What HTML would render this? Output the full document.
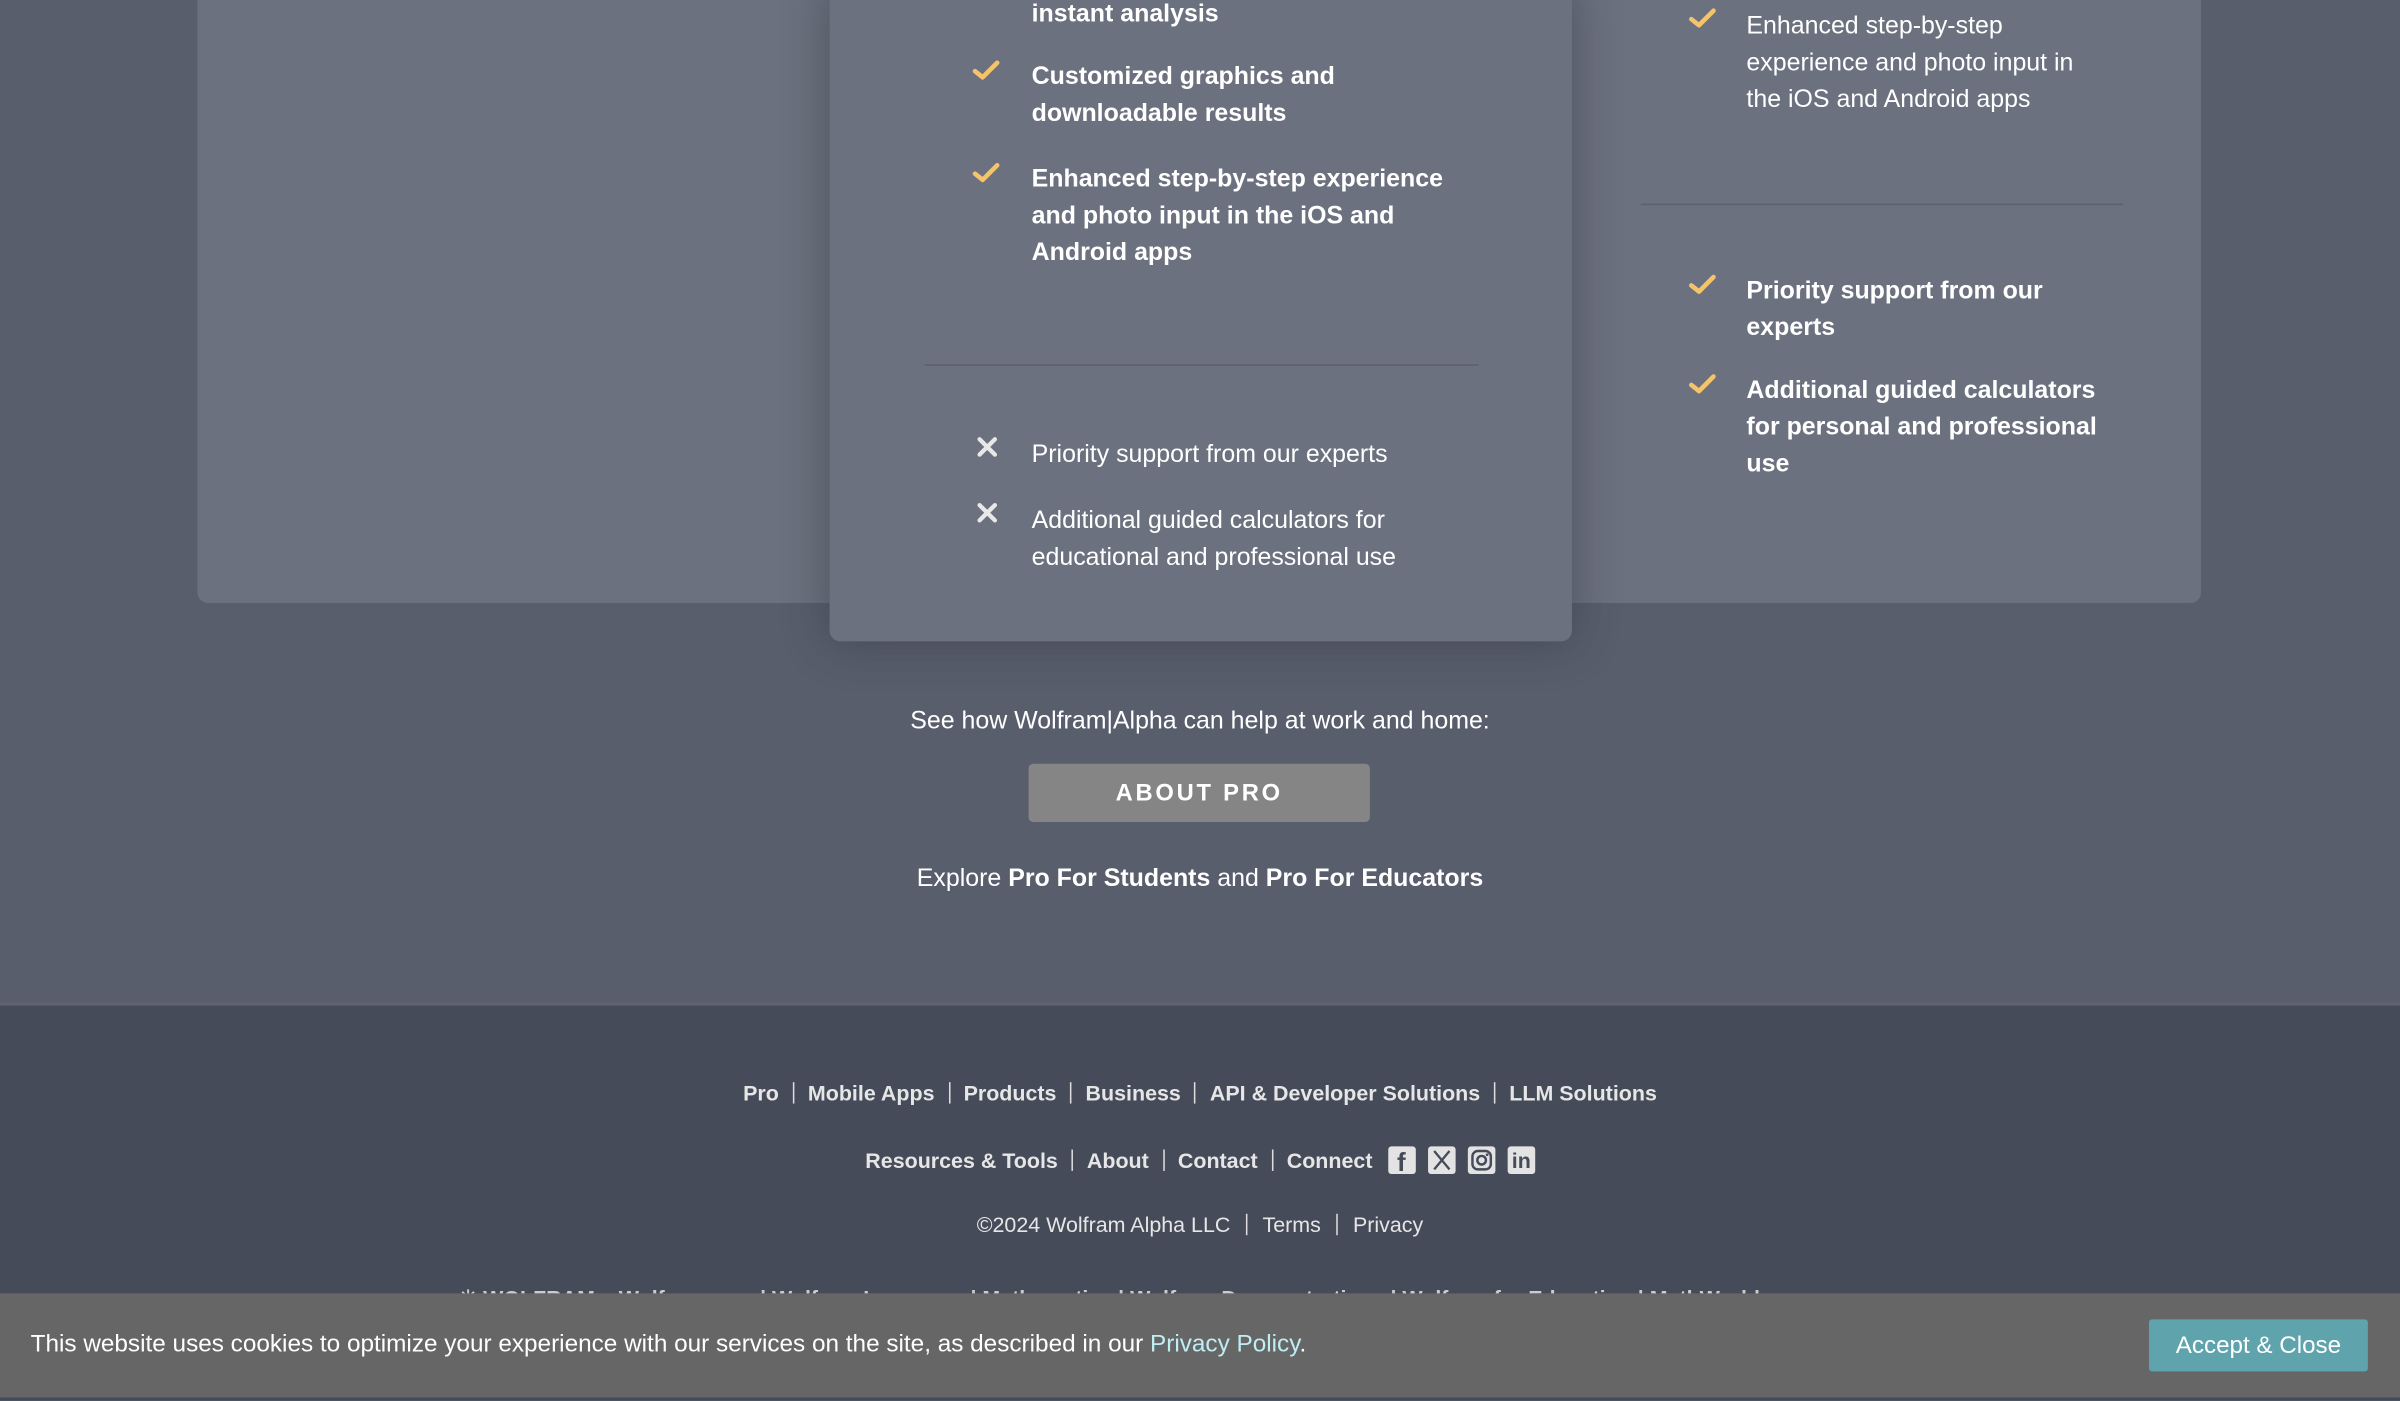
<!DOCTYPE html>
<html><head><meta charset="utf-8"><style>
html,body{margin:0;padding:0;width:2400px;height:1398px;overflow:hidden;background:#585e6c;}
#s{position:absolute;left:0;top:0;width:1568px;height:913px;transform:scale(1.530612);transform-origin:0 0;font-family:"Liberation Sans",sans-serif;color:#fff;}
.a{position:absolute;}
.wide{left:129px;top:-10px;width:1309px;height:404px;background:#6b717e;border-radius:0 0 7px 7px;}
.mid{left:542px;top:-10px;width:485px;height:429px;background:#6b717e;border-radius:0 0 7px 7px;box-shadow:0 0 30px rgba(40,44,56,.45);}
.t{position:absolute;font-size:16.3px;line-height:24px;}
.b{font-weight:bold;}
.ck{position:absolute;width:18px;height:14px;}
.hr{position:absolute;height:1px;background:#5b606d;}
.c{position:absolute;left:0;width:1568px;text-align:center;}
.fl{font-size:14px;font-weight:bold;color:#e6e6e6;}
.fl span.s{display:inline-block;width:1px;height:14px;background:#ddd;margin:0 9px;vertical-align:-2px;}
.ic{display:inline-block;width:18px;height:18px;background:#e3e3e3;border-radius:2px;vertical-align:-4px;margin-left:8px;position:relative;}
</style></head><body><div id="s">
<div class="a wide"></div>
<div class="a mid"></div>

<svg width="0" height="0" style="position:absolute"><defs>
<symbol id="chk" viewBox="0 0 18 14"><path d="M2 7.5 L7 11.5 L16.5 2" stroke="#f5c46a" stroke-width="3" fill="none" stroke-linecap="round" stroke-linejoin="round"/></symbol>
<symbol id="x" viewBox="0 0 14 14"><path d="M2 2 L12 12 M12 2 L2 12" stroke="#e8e8e8" stroke-width="2.8" stroke-linecap="round"/></symbol>
</defs></svg>

<div class="t b" style="left:674px;top:-3px;">instant analysis</div>
<svg class="ck" style="left:635px;top:39px"><use href="#chk"/></svg>
<div class="t b" style="left:674px;top:38px;">Customized graphics and<br>downloadable results</div>
<svg class="ck" style="left:635px;top:106px"><use href="#chk"/></svg>
<div class="t b" style="left:674px;top:105px;">Enhanced step-by-step experience<br>and photo input in the iOS and<br>Android apps</div>
<div class="hr" style="left:604px;top:238px;width:362px;"></div>
<svg style="position:absolute;left:638px;top:285px;width:14px;height:14px"><use href="#x"/></svg>
<div class="t" style="left:674px;top:285px;">Priority support from our experts</div>
<svg style="position:absolute;left:638px;top:328px;width:14px;height:14px"><use href="#x"/></svg>
<div class="t" style="left:674px;top:328px;">Additional guided calculators for<br>educational and professional use</div>

<svg class="ck" style="left:1103px;top:5px"><use href="#chk"/></svg>
<div class="t" style="left:1141px;top:5px;">Enhanced step-by-step<br>experience and photo input in<br>the iOS and Android apps</div>
<div class="hr" style="left:1072px;top:133px;width:315px;"></div>
<svg class="ck" style="left:1103px;top:179px"><use href="#chk"/></svg>
<div class="t b" style="left:1141px;top:178px;">Priority support from our<br>experts</div>
<svg class="ck" style="left:1103px;top:244px"><use href="#chk"/></svg>
<div class="t b" style="left:1141px;top:243px;">Additional guided calculators<br>for personal and professional<br>use</div>

<div class="c" style="top:462px;font-size:16.3px;">See how Wolfram|Alpha can help at work and home:</div>
<div class="a" style="left:672px;top:499px;width:223px;height:38px;background:#858585;border-radius:3px;text-align:center;line-height:39px;font-weight:bold;font-size:15.5px;letter-spacing:1.8px;">ABOUT PRO</div>
<div class="c" style="top:565px;font-size:16.3px;">Explore <b>Pro For Students</b> and <b>Pro For Educators</b></div>

<div class="a" style="left:0;top:655px;width:1568px;height:258px;background:#464b59;border-top:2px solid #5f6470;"></div>
<div class="c fl" style="top:706px;">Pro<span class="s"></span>Mobile Apps<span class="s"></span>Products<span class="s"></span>Business<span class="s"></span>API &amp; Developer Solutions<span class="s"></span>LLM Solutions</div>
<div class="c fl" style="top:749px;">Resources &amp; Tools<span class="s"></span>About<span class="s"></span>Contact<span class="s"></span>Connect<span class="ic" style="margin-left:10px"><span style="position:absolute;left:6px;top:1px;color:#464b59;font-size:17px;font-weight:bold;">f</span></span><span class="ic"><svg width="18" height="18" style="position:absolute;left:0;top:0"><path d="M4 3 L14 15 M14 3 L4 15" stroke="#464b59" stroke-width="1.5"/></svg></span><span class="ic"><svg width="18" height="18" style="position:absolute;left:0;top:0"><rect x="3" y="3" width="12" height="12" rx="3.5" stroke="#464b59" stroke-width="1.6" fill="none"/><circle cx="9" cy="9" r="2.8" stroke="#464b59" stroke-width="1.6" fill="none"/><circle cx="12.6" cy="5.4" r=".9" fill="#464b59"/></svg></span><span class="ic"><span style="position:absolute;left:3px;top:1px;color:#464b59;font-size:14px;font-weight:bold;">in</span></span></div>
<div class="c" style="top:792px;font-size:14px;color:#e6e6e6;">©2024 Wolfram Alpha LLC<span style="display:inline-block;width:1px;height:14px;background:#ddd;margin:0 10px;vertical-align:-2px;"></span>Terms<span style="display:inline-block;width:1px;height:14px;background:#ddd;margin:0 10px;vertical-align:-2px;"></span>Privacy</div>
<div class="a" style="left:300px;top:840px;font-size:14px;font-weight:bold;color:#ccc;white-space:nowrap;">✳ WOLFRAM &nbsp;&nbsp; Wolfram.com | Wolfram Language | Mathematica | Wolfram Demonstrations | Wolfram for Education | MathWorld</div>

<div class="a" style="left:0;top:845px;width:1568px;height:68px;background:#666666;"></div>
<div class="a" style="left:20px;top:870px;font-size:15.9px;white-space:nowrap;">This website uses cookies to optimize your experience with our services on the site, as described in our <span style="color:#bfeef2">Privacy Policy</span>.</div>
<div class="a" style="left:1404px;top:862px;width:143px;height:34px;background:#5fa4ad;border-radius:2px;text-align:center;line-height:35px;font-size:15.8px;">Accept &amp; Close</div>
</div></body></html>
